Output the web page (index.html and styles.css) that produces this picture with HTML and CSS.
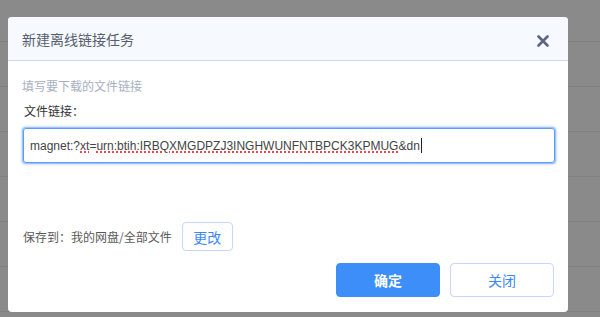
FILE: index.html
```html
<!DOCTYPE html>
<html lang="zh-CN">
<head>
  <meta charset="UTF-8">
  <title>新建离线链接任务</title>
  <link rel="stylesheet" href="styles.css">
</head>
<body>
  <div class="dialog">
    <div class="dialog-header">
      <span class="dialog-title">新建离线链接任务</span>
      <span class="dialog-close">
        <svg width="12" height="12" viewBox="0 0 12 12">
          <path d="M1.5 1.5 L10.5 10.5 M10.5 1.5 L1.5 10.5" stroke="#5a6683" stroke-width="2.6" stroke-linecap="round"/>
        </svg>
      </span>
    </div>
    <div class="dialog-body">
      <div class="hint">填写要下载的文件链接</div>
      <div class="field-label">文件链接：</div>
      <div class="link-input">magnet:?<span class="misspelled">xt</span>=<span class="misspelled">urn:btih:IRBQXMGDPZJ3INGHWUNFNTBPCK3KPMUG</span>&amp;dn<span class="caret"></span></div>
      <div class="save-row">
        <span class="save-path">保存到：我的网盘/全部文件</span>
        <button class="btn btn-small">更改</button>
      </div>
      <div class="footer">
        <button class="btn btn-primary">确定</button>
        <button class="btn btn-default">关闭</button>
      </div>
    </div>
  </div>
</body>
</html>
```

FILE: styles.css
```css
/* Page background: dimmed list behind the dialog */
body {
  margin: 0;
  height: 317px;
  overflow: hidden;
  font-family: "Liberation Sans", "Noto Sans CJK SC", sans-serif;
  background-color: #8a8a8a;
  background-image: repeating-linear-gradient(to bottom, transparent 0, transparent 44px, #818181 44px, #818181 45px);
  background-position: 0 -3px;
}

/* Dialog box */
.dialog {
  margin: 17px 0 0 8px;
  width: 560px;
  height: 295px;
  background: #ffffff;
  border-radius: 4px;
  overflow: hidden;
}

/* Header */
.dialog-header {
  height: 43px;
  display: flex;
  align-items: center;
  justify-content: space-between;
  padding: 0 19px 0 14px;
  background: #f6f9fe;
  border-bottom: 1px solid #c9dbf4;
}
.dialog-title {
  font-family: "Noto Sans CJK SC", sans-serif;
  font-size: 14px;
  line-height: 18px;
  color: #575f6e;
}
.dialog-close {
  display: flex;
  margin-top: 4px;
}

/* Body */
.dialog-body {
  padding: 17px 13px 0 14px;
}
.hint {
  font-family: "Noto Sans CJK SC", sans-serif;
  font-size: 12px;
  line-height: 16px;
  color: #a7b0bf;
}
.field-label {
  margin: 9px 0 0 2px;
  font-family: "Noto Sans CJK SC", sans-serif;
  font-size: 12px;
  line-height: 16px;
  color: #333333;
}

/* Link input */
.link-input {
  box-sizing: border-box;
  margin: 9px 0 0 1px;
  height: 35px;
  padding: 0 6px;
  display: flex;
  align-items: center;
  border: 1px solid #5d9bf6;
  border-radius: 3px;
  box-shadow: 0 0 0 1px #9cc2fa, 0 0 3px 1px rgba(93, 155, 246, 0.6);
  font-size: 12px;
  color: #444444;
  white-space: pre;
}
.misspelled {
  text-decoration: underline dotted #f04848;
  text-decoration-thickness: 2px;
  text-underline-offset: 2px;
}
.caret {
  display: inline-block;
  width: 1px;
  height: 15px;
  margin-left: 1px;
  background: #222222;
}

/* Save location row */
.save-row {
  margin: 59px 0 0 1px;
  height: 29px;
  display: flex;
  align-items: center;
  gap: 10px;
}
.save-path {
  font-family: "Noto Sans CJK SC", sans-serif;
  font-size: 12px;
  line-height: 16px;
  color: #5a5a5a;
}

/* Buttons */
.btn {
  box-sizing: border-box;
  font-family: "Noto Sans CJK SC", sans-serif;
  font-size: 14px;
  border-radius: 4px;
  cursor: pointer;
  padding: 0;
}
.btn-small {
  width: 51px;
  height: 29px;
  background: #ffffff;
  color: #3c87f6;
  border: 1px solid #c3d8fa;
}
.footer {
  margin-top: 12px;
  display: flex;
  justify-content: flex-end;
  gap: 10px;
  padding-right: 1px;
}
.btn-primary {
  width: 104px;
  height: 34px;
  background: #3d8ef9;
  border: 1px solid #3d8ef9;
  color: #ffffff;
  font-weight: bold;
}
.btn-default {
  width: 104px;
  height: 34px;
  background: #ffffff;
  border: 1px solid #c3d8fa;
  color: #3c87f6;
}
```
